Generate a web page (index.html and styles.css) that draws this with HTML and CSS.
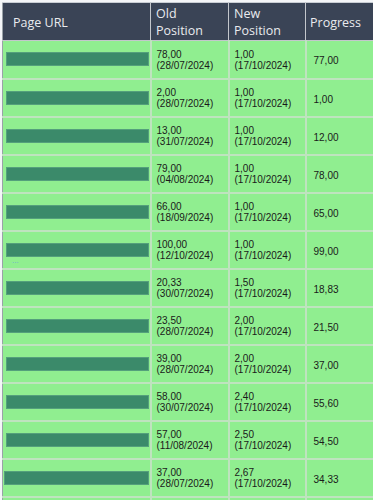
FILE: index.html
```html
<!DOCTYPE html>
<html>
<head>
<meta charset="utf-8">
<link rel="stylesheet" href="styles.css">
</head>
<body>
<div class="frame">
<table class="grid">
  <colgroup>
    <col class="c-url"><col class="c-old"><col class="c-new"><col class="c-prog">
  </colgroup>
  <thead>
    <tr>
      <th class="h-url">Page URL</th>
      <th>Old<br>Position</th>
      <th>New<br>Position</th>
      <th class="h-prog">Progress</th>
    </tr>
  </thead>
  <tbody>
    <tr><td class="url"><div class="bar"></div></td><td>78,00<br>(28/07/2024)</td><td>1,00<br>(17/10/2024)</td><td class="prog">77,00</td></tr>
    <tr><td class="url"><div class="bar"></div></td><td>2,00<br>(28/07/2024)</td><td>1,00<br>(17/10/2024)</td><td class="prog">1,00</td></tr>
    <tr><td class="url"><div class="bar"></div></td><td>13,00<br>(31/07/2024)</td><td>1,00<br>(17/10/2024)</td><td class="prog">12,00</td></tr>
    <tr><td class="url"><div class="bar"></div></td><td>79,00<br>(04/08/2024)</td><td>1,00<br>(17/10/2024)</td><td class="prog">78,00</td></tr>
    <tr><td class="url"><div class="bar"></div></td><td>66,00<br>(18/09/2024)</td><td>1,00<br>(17/10/2024)</td><td class="prog">65,00</td></tr>
    <tr><td class="url"><div class="bar"></div><span class="dots">...</span></td><td>100,00<br>(12/10/2024)</td><td>1,00<br>(17/10/2024)</td><td class="prog">99,00</td></tr>
    <tr><td class="url"><div class="bar"></div></td><td>20,33<br>(30/07/2024)</td><td>1,50<br>(17/10/2024)</td><td class="prog">18,83</td></tr>
    <tr><td class="url"><div class="bar"></div></td><td>23,50<br>(28/07/2024)</td><td>2,00<br>(17/10/2024)</td><td class="prog">21,50</td></tr>
    <tr><td class="url"><div class="bar"></div></td><td>39,00<br>(28/07/2024)</td><td>2,00<br>(17/10/2024)</td><td class="prog">37,00</td></tr>
    <tr><td class="url"><div class="bar"></div></td><td>58,00<br>(30/07/2024)</td><td>2,40<br>(17/10/2024)</td><td class="prog">55,60</td></tr>
    <tr><td class="url"><div class="bar"></div></td><td>57,00<br>(11/08/2024)</td><td>2,50<br>(17/10/2024)</td><td class="prog">54,50</td></tr>
    <tr><td class="url"><div class="bar bar-left"></div></td><td>37,00<br>(28/07/2024)</td><td>2,67<br>(17/10/2024)</td><td class="prog">34,33</td></tr>
    <tr><td class="url"></td><td></td><td></td><td class="prog"></td></tr>
  </tbody>
</table>
</div>
</body>
</html>
```
FILE: styles.css
```css
html, body {
  margin: 0;
  padding: 0;
  background: #f4f6f8;
}
.frame {
  width: 373px;
  height: 500px;
  overflow: hidden;
  padding: 2px 0 0 2px;
  box-sizing: border-box;
}
.grid {
  border-collapse: collapse;
  table-layout: fixed;
  width: 390px;
  border-left: 1px solid #9aa2a8;
  border-top: 1px solid #c9ced4;
}
.c-url { width: 148px; }
.c-old { width: 78px; }
.c-new { width: 77px; }
.c-prog { width: 87px; }

thead th {
  background: #3a4456;
  color: #e9ebee;
  font-family: "Open Sans", "DejaVu Sans", sans-serif;
  font-weight: 400;
  font-size: 12.5px;
  line-height: 17px;
  text-align: left;
  vertical-align: middle;
  height: 38px;
  padding: 1px 4px 0 5px;
  border-right: 1px solid #c3c7cc;
  border-bottom: 1px solid #c3c7cc;
  box-sizing: border-box;
}
thead th.h-url { padding-left: 10px; }
thead th.h-prog { padding-left: 4px; }

tbody td {
  background: #90ee90;
  color: #1a1a1a;
  font-family: "Liberation Sans", Arial, sans-serif;
  font-size: 10px;
  line-height: 11px;
  height: 38px;
  padding: 1px 3px 0 5px;
  vertical-align: middle;
  border-right: 2px solid #bfe3bf;
  border-bottom: 2px solid #bfe3bf;
  box-sizing: border-box;
  white-space: nowrap;
}
tbody td.url {
  padding: 0 1px 0 3px;
  position: relative;
}
tbody td.prog {
  padding-left: 7px;
  padding-top: 3px;
}
.bar {
  height: 14px;
  background: #3b8a6a;
  border: 1px solid #54a07c;
  box-sizing: border-box;
}
.bar-left { margin-left: -2px; }
.dots {
  position: absolute;
  left: 9px;
  top: 26px;
  font-size: 8px;
  line-height: 6px;
  color: #6fa8dc;
}
```
